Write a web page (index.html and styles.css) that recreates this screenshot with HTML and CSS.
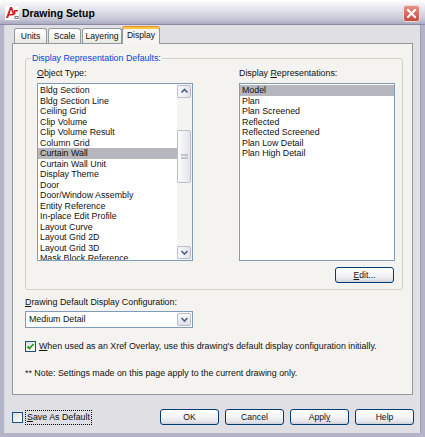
FILE: index.html
```html
<!DOCTYPE html>
<html>
<head>
<meta charset="utf-8">
<link rel="stylesheet" href="styles.css">
</head>
<body>
<div class="window">
  <div class="titlebar">
    <svg class="appicon" width="14" height="14" viewBox="0 0 14 14">
      <rect x="0" y="0" width="14" height="14" fill="#fff"/>
      <path d="M1 12 L5 1 L7 1 L10 9 L8 9 L6 3.5 L3.2 12 Z" fill="#d42020"/>
      <path d="M4 8 L8 8 L8.6 9.6 L3.5 9.6 Z" fill="#d42020"/>
      <path d="M9 4 L13 4 L13 5.5 L10.5 5.5 L10.5 8 L9 8 Z" fill="#d42020"/>
      <rect x="9.5" y="10" width="4" height="3" fill="#7a7a7a"/>
      <rect x="10.5" y="11" width="2" height="1" fill="#fff"/>
    </svg>
    <span class="title">Drawing Setup</span>
    <span class="close">
      <svg width="17" height="17" viewBox="0 0 17 17">
        <defs>
          <linearGradient id="cg" x1="0" y1="0" x2="0" y2="1">
            <stop offset="0" stop-color="#e9958a"/>
            <stop offset="1" stop-color="#c4463c"/>
          </linearGradient>
        </defs>
        <rect x="0.5" y="0.5" width="16" height="16" rx="2.5" fill="url(#cg)" stroke="#f4d8d4"/>
        <path d="M5 5 L12 12 M12 5 L5 12" stroke="#fff" stroke-width="2" stroke-linecap="square"/>
      </svg>
    </span>
  </div>
  <div class="body">
    <div class="tabs">
      <div class="tab t-units">Units</div>
      <div class="tab t-scale">Scale</div>
      <div class="tab t-layer">Layering</div>
      <div class="tab active t-display">Display</div>
    </div>
    <div class="panel">
      <div class="group">
        <span class="group-title">Display Representation Defaults:</span>
        <div class="cols">
          <div class="col">
            <div class="lbl"><u>O</u>bject Type:</div>
            <div class="list">
              <div class="items">
                <div class="item">Bldg Section</div>
                <div class="item">Bldg Section Line</div>
                <div class="item">Ceiling Grid</div>
                <div class="item">Clip Volume</div>
                <div class="item">Clip Volume Result</div>
                <div class="item">Column Grid</div>
                <div class="item sel">Curtain Wall</div>
                <div class="item">Curtain Wall Unit</div>
                <div class="item">Display Theme</div>
                <div class="item">Door</div>
                <div class="item">Door/Window Assembly</div>
                <div class="item">Entity Reference</div>
                <div class="item">In-place Edit Profile</div>
                <div class="item">Layout Curve</div>
                <div class="item">Layout Grid 2D</div>
                <div class="item">Layout Grid 3D</div>
                <div class="item">Mask Block Reference</div>
              </div>
              <div class="vscroll">
                <div class="sbtn">
                  <svg width="13" height="13" viewBox="0 0 13 13"><path d="M3.5 7.5 L6.5 4.5 L9.5 7.5" fill="none" stroke="#4d6185" stroke-width="1.6"/></svg>
                </div>
                <div class="track">
                  <div class="thumb">
                    <svg width="7" height="5" viewBox="0 0 7 5"><path d="M0 1 H7 M0 4 H7" stroke="#8f97b0" stroke-width="1"/></svg>
                  </div>
                </div>
                <div class="sbtn">
                  <svg width="13" height="13" viewBox="0 0 13 13"><path d="M3.5 5 L6.5 8 L9.5 5" fill="none" stroke="#4d6185" stroke-width="1.6"/></svg>
                </div>
              </div>
            </div>
          </div>
          <div class="col">
            <div class="lbl">Display <u>R</u>epresentations:</div>
            <div class="list">
              <div class="items">
                <div class="item sel">Model</div>
                <div class="item">Plan</div>
                <div class="item">Plan Screened</div>
                <div class="item">Reflected</div>
                <div class="item">Reflected Screened</div>
                <div class="item">Plan Low Detail</div>
                <div class="item">Plan High Detail</div>
              </div>
            </div>
            <div class="btnrow">
              <div class="btn edit"><u>E</u>dit...</div>
            </div>
          </div>
        </div>
      </div>
      <div class="lbl cfg-lbl"><u>D</u>rawing Default Display Configuration:</div>
      <div class="combo">
        <span class="combo-text">Medium Detail</span>
        <span class="drop">
          <svg width="13" height="13" viewBox="0 0 13 13"><path d="M3.5 5 L6.5 8 L9.5 5" fill="none" stroke="#4d6185" stroke-width="1.6"/></svg>
        </span>
      </div>
      <div class="check-row">
        <span class="cb">
          <svg width="9" height="9" viewBox="0 0 9 9"><path d="M1.5 4.5 L3.5 6.5 L7.5 2" fill="none" stroke="#21a121" stroke-width="1.8"/></svg>
        </span>
        <span class="cb-text"><u>W</u>hen used as an Xref Overlay, use this drawing's default display configuration initially.</span>
      </div>
      <div class="note">** Note: Settings made on this page apply to the current drawing only.</div>
    </div>
    <div class="bottom">
      <div class="save">
        <span class="cb"></span>
        <span class="focus"><u>S</u>ave As Default</span>
      </div>
      <div class="buttons">
        <div class="btn">OK</div>
        <div class="btn">Cancel</div>
        <div class="btn">Appl<u>y</u></div>
        <div class="btn">Help</div>
      </div>
    </div>
  </div>
</div>
</body>
</html>
```
FILE: styles.css
```css
html, body {
  margin: 0;
  padding: 0;
  background: #ffffff;
}

body {
  font-family: "Liberation Sans", Arial, sans-serif;
  font-size: 8.85px;
  color: #111;
}

u {
  text-decoration: underline;
  text-underline-offset: 1px;
}

.window {
  width: 425px;
  height: 437px;
  box-sizing: border-box;
  display: flex;
  flex-direction: column;
  border-radius: 7px 7px 0 0;
  overflow: hidden;
  background: #e0dfe3;
}

.titlebar {
  height: 25px;
  flex: none;
  box-sizing: border-box;
  display: flex;
  align-items: center;
  padding: 2px 5px 0 5px;
  background: linear-gradient(#ffffff 0%, #f2f2f6 18%, #dcdce6 50%, #c6c6d6 80%, #a9a9c1 100%);
  border-bottom: 1px solid #8a8aa4;
}

.appicon {
  flex: none;
  margin-right: 3px;
}

.title {
  font-size: 10.4px;
  font-weight: bold;
  color: #000;
  flex: 1;
}

.close {
  width: 17px;
  height: 17px;
  flex: none;
}

.close svg {
  display: block;
}

.body {
  flex: 1;
  display: flex;
  flex-direction: column;
  padding: 1px 8px 0 8px;
  border-left: 4px solid #b4b4c8;
  border-right: 4px solid #b4b4c8;
  border-bottom: 4px solid #b4b4c8;
  box-shadow: inset 1px 0 0 #d9d9e4, inset -1px 0 0 #9d9db4;
}

.tabs {
  height: 17px;
  display: flex;
  align-items: flex-end;
  padding-left: 2px;
  position: relative;
  z-index: 1;
}

.tab {
  height: 15px;
  box-sizing: border-box;
  border: 1px solid #919b9c;
  border-bottom: none;
  border-radius: 3px 3px 0 0;
  background: linear-gradient(#ffffff, #f3f3ef 60%, #e8e8e2);
  text-align: center;
  line-height: 14px;
  font-size: 8.6px;
}

.t-units { width: 33px; }
.t-scale { width: 33px; margin-left: 1px; }
.t-layer { width: 40px; margin-left: 1px; }

.t-display {
  width: 38px;
  height: 18px;
  margin-bottom: -1px;
  background: #f6f5f1;
  border-top: 1px solid #e68b2c;
  box-shadow: inset 0 2px 0 #ffc83c;
  line-height: 16px;
}

.panel {
  height: 352px;
  flex: none;
  box-sizing: border-box;
  border: 1px solid #919b9c;
  background: #f4f3ef;
  padding: 0 9px 0 12px;
  display: flex;
  flex-direction: column;
}

.group {
  margin-top: 14px;
  position: relative;
  border: 1px solid #d0d0c4;
  border-radius: 3px;
  padding: 9px 7px 6px 11px;
}

.group-title {
  position: absolute;
  top: -6px;
  left: 5px;
  padding: 0 1px;
  line-height: 10px;
  background: #f4f3ef;
  color: #0046d5;
}

.cols {
  display: flex;
  align-items: flex-start;
  gap: 46px;
}

.col {
  width: 156px;
  display: flex;
  flex-direction: column;
}

.lbl {
  line-height: 10px;
  height: 10px;
  margin-bottom: 5px;
  white-space: nowrap;
}

.list {
  height: 178px;
  box-sizing: border-box;
  border: 1px solid #7f9db9;
  background: #ffffff;
  display: flex;
  overflow: hidden;
}

.items {
  flex: 1;
  padding-top: 1px;
  overflow: hidden;
}

.item {
  height: 10.5px;
  line-height: 10.5px;
  padding-left: 2px;
  white-space: nowrap;
}

.item.sel {
  background: #b6b6bf;
}

.vscroll {
  width: 15px;
  flex: none;
  display: flex;
  flex-direction: column;
  background: #f4f4f1;
  padding: 1px 1px 1px 0;
  box-sizing: border-box;
}

.sbtn {
  height: 13px;
  flex: none;
  box-sizing: border-box;
  border: 1px solid #b8bccb;
  border-radius: 2px;
  background: linear-gradient(90deg, #fbfbfc, #e3e4ea);
  display: flex;
  align-items: center;
  justify-content: center;
}

.sbtn svg {
  display: block;
  margin: -1px;
}

.track {
  flex: 1;
  display: flex;
  flex-direction: column;
}

.thumb {
  margin-top: 32px;
  height: 53px;
  box-sizing: border-box;
  border: 1px solid #b8bccb;
  border-radius: 2px;
  background: linear-gradient(90deg, #fbfbfc, #e3e4ea);
  display: flex;
  align-items: center;
  justify-content: center;
}

.thumb svg {
  display: block;
}

.btnrow {
  display: flex;
  justify-content: flex-end;
  margin-top: 6px;
  margin-right: 1px;
}

.btn {
  height: 16px;
  box-sizing: border-box;
  border: 1px solid #003c74;
  border-radius: 3px;
  background: linear-gradient(#ffffff 0%, #f4f4f6 50%, #e2e2e8 85%, #cfcfd8 100%);
  text-align: center;
  line-height: 14px;
  width: 59px;
  font-size: 8.6px;
}

.cfg-lbl {
  margin-top: 7px;
  margin-bottom: 0;
}

.combo {
  margin-top: 4px;
  width: 168px;
  height: 17px;
  box-sizing: border-box;
  border: 1px solid #7f9db9;
  background: #ffffff;
  display: flex;
  align-items: center;
  padding: 1px;
}

.combo-text {
  flex: 1;
  padding-left: 2px;
  line-height: 13px;
}

.drop {
  width: 14px;
  height: 13px;
  box-sizing: border-box;
  border: 1px solid #b8bccb;
  border-radius: 2px;
  background: linear-gradient(#fbfbfc, #dfe0e7);
  display: flex;
  align-items: center;
  justify-content: center;
}

.drop svg {
  display: block;
  margin: -1px;
}

.check-row {
  margin-top: 13px;
  height: 11px;
  display: flex;
  align-items: center;
  white-space: nowrap;
}

.cb {
  width: 11px;
  height: 11px;
  flex: none;
  box-sizing: border-box;
  border: 1px solid #1c5180;
  background: linear-gradient(135deg, #dcdcd7, #ffffff);
  display: flex;
  align-items: center;
  justify-content: center;
}

.cb svg {
  display: block;
}

.cb-text {
  margin-left: 3px;
  line-height: 11px;
}

.note {
  margin-top: 16px;
  line-height: 10px;
  white-space: nowrap;
}

.bottom {
  margin-top: 14px;
  height: 16px;
  display: flex;
  align-items: center;
  justify-content: space-between;
}

.save {
  display: flex;
  align-items: center;
}

.focus {
  margin-left: 2px;
  padding: 1px 1px;
  line-height: 11px;
  border: 1px dotted #000;
}

.buttons {
  display: flex;
  gap: 6px;
  margin-right: -1px;
}
```
